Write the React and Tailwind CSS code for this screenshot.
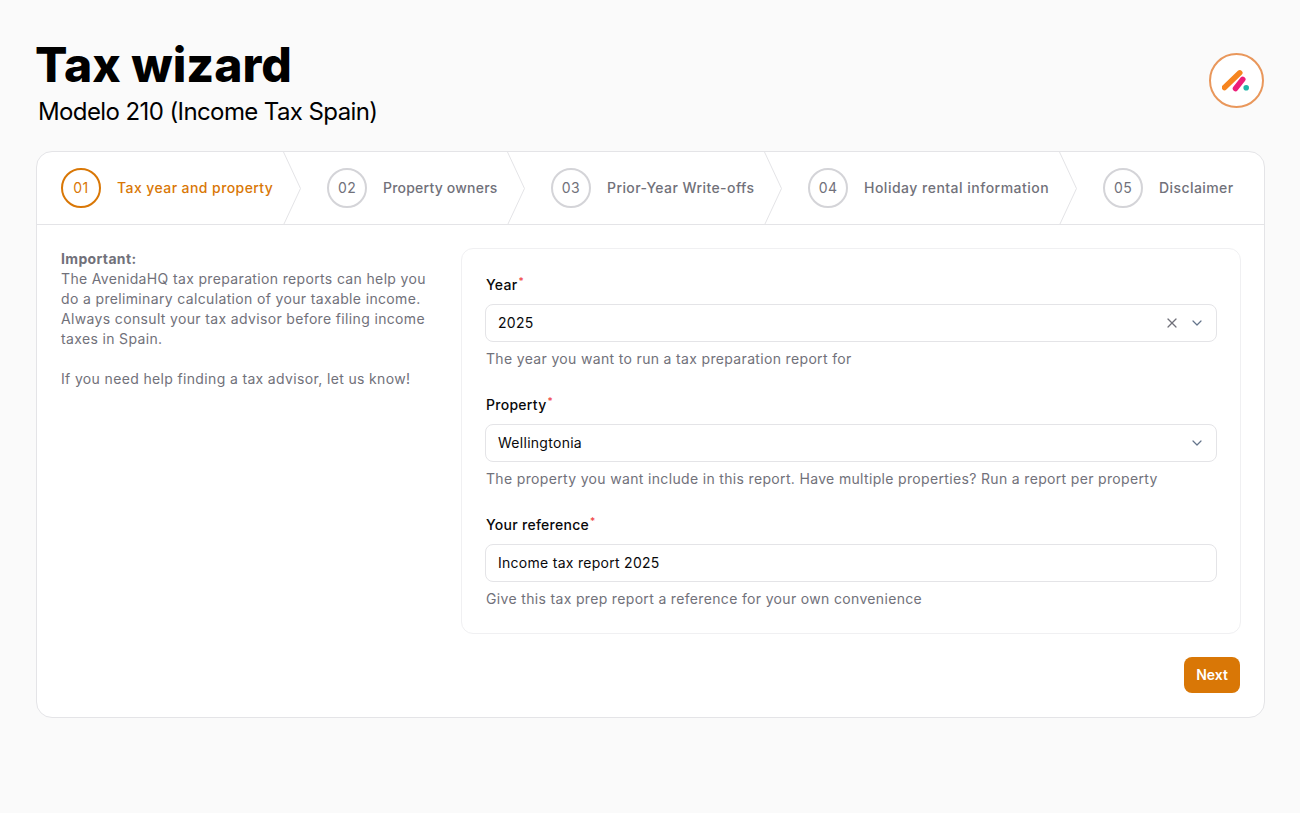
import { ChevronDown, X } from 'lucide-react';

const steps = [
  { num: '01', label: 'Tax year and property', width: 'w-[266px]', tracking: 'tracking-[0.03em]' },
  { num: '02', label: 'Property owners', width: 'w-[224px]', tracking: 'tracking-[0.015em]' },
  { num: '03', label: 'Prior-Year Write-offs', width: 'w-[257px]', tracking: 'tracking-[0.03em]' },
  { num: '04', label: 'Holiday rental information', width: 'w-[295px]', tracking: 'tracking-[0.035em]' },
  { num: '05', label: 'Disclaimer', width: 'flex-1', tracking: 'tracking-[0.03em]' },
];

function Logo() {
  return (
    <div className="flex h-[55px] w-[55px] items-center justify-center rounded-full border-2 border-[#e9975b] bg-white">
      <svg width="30" height="24" viewBox="0 0 30 24" fill="none">
        <line x1="2.5" y1="18.5" x2="17.8" y2="3.8" stroke="#f6851f" strokeWidth="5.5" strokeLinecap="round" />
        <line x1="13.5" y1="19.5" x2="20.8" y2="10.3" stroke="#ec1e79" strokeWidth="5.5" strokeLinecap="round" />
        <circle cx="24.2" cy="18.8" r="2.8" fill="#1eb6a8" />
      </svg>
    </div>
  );
}

function Step({ num, label, width, tracking, active, last }) {
  return (
    <div className={`relative flex h-full items-center gap-4 pl-6 ${width}`}>
      <div
        className={`flex h-10 w-10 shrink-0 items-center justify-center rounded-full border-2 text-sm tracking-[0.03em] ${
          active ? 'border-[#d97706] text-[#d97706]' : 'border-[#d4d4d8] text-[#71717a]'
        }`}
      >
        {num}
      </div>
      <span className={`whitespace-nowrap text-sm font-medium ${tracking} ${active ? 'text-[#d97706]' : 'text-[#71717a]'}`}>
        {label}
      </span>
      {!last && (
        <svg className="absolute right-0 top-0 h-[73px] w-[22px]" viewBox="0 0 22 73" fill="none">
          <path d="M2.5 0 L19.5 36.5 L2.5 73" stroke="#e4e4e7" strokeWidth="1" />
        </svg>
      )}
    </div>
  );
}

function Field({ label, value, help, clearable, select }) {
  return (
    <div>
      <div className="text-sm font-medium leading-5 tracking-[0.02em] text-[#09090b]">
        {label}
        <sup className="ml-px text-[10px] text-[#ef4444]">*</sup>
      </div>
      <div className="-mx-px mt-[9px] flex h-[38px] items-center rounded-lg border border-[#e4e4e7] bg-white pl-3 pr-[11px] text-sm tracking-[0.02em] text-[#09090b]">
        <span className="flex-1">{value}</span>
        {clearable && <X className="mr-[9px] h-4 w-4 text-[#71717a]" strokeWidth={1.8} />}
        {select && <ChevronDown className="h-4 w-4 text-[#64748b]" strokeWidth={1.8} />}
      </div>
      <p className="mt-[7px] text-sm leading-5 tracking-[0.024em] text-[#71717a]">{help}</p>
    </div>
  );
}

export default function App() {
  return (
    <div className="min-h-[813px] bg-[#fafafa] px-9 pt-[37px] font-['Inter',sans-serif]">
      <div className="flex items-start justify-between">
        <div>
          <h1 className="-ml-px text-[48px] font-extrabold leading-[56px] tracking-[0] text-black">Tax wizard</h1>
          <p className="ml-0.5 mt-[3px] text-2xl leading-8 tracking-[-0.025em] text-black">Modelo 210 (Income Tax Spain)</p>
        </div>
        <div className="mt-4">
          <Logo />
        </div>
      </div>

      <div className="mt-[23px] w-[1229px] rounded-2xl border border-[#e4e4e7] bg-white">
        <div className="flex h-[73px] border-b border-[#e4e4e7]">
          {steps.map((s, i) => (
            <Step key={s.num} {...s} active={i === 0} last={i === steps.length - 1} />
          ))}
        </div>

        <div className="flex gap-6 pb-6 pl-6 pr-[23px] pt-[23px]">
          <div className="w-[376px] shrink-0 pt-px text-sm leading-5 tracking-[0.025em] text-[#71717a]">
            <div className="font-bold">Important:</div>
            <p>
              The AvenidaHQ tax preparation reports can help you do a preliminary calculation of your taxable income.
              Always consult your tax advisor before filing income taxes in Spain.
            </p>
            <p className="mt-5">If you need help finding a tax advisor, let us know!</p>
          </div>

          <div className="flex-1">
            <div className="flex flex-col gap-[26px] rounded-xl border border-[#f0f0f2] bg-white px-6 pb-6 pt-[26px]">
              <Field label="Year" value="2025" help="The year you want to run a tax preparation report for" clearable select />
              <Field
                label="Property"
                value="Wellingtonia"
                help="The property you want include in this report. Have multiple properties? Run a report per property"
                select
              />
              <Field label="Your reference" value="Income tax report 2025" help="Give this tax prep report a reference for your own convenience" />
            </div>
            <div className="mt-[23px] flex justify-end pr-px">
              <button type="button" className="h-9 w-14 rounded-lg bg-[#d97706] text-sm font-semibold text-white">
                Next
              </button>
            </div>
          </div>
        </div>
      </div>
    </div>
  );
}
